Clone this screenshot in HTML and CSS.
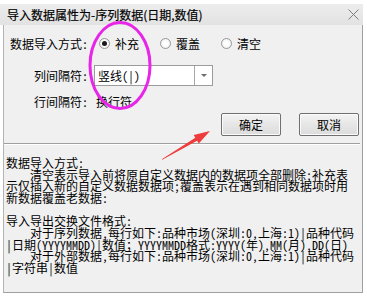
FILE: index.html
```html
<!DOCTYPE html>
<html lang="zh-CN">
<head>
  <meta charset="UTF-8" />
  <title>导入数据属性</title>
  <link rel="stylesheet" href="styles.css">
</head>
<body>
  <div class="window">
    <div class="titlebar">
      <span class="title">导入数据属性为-序列数据(日期,数值)</span>
      <svg class="close" width="11" height="11" viewBox="0 0 11 11">
        <path d="M0.5 0.5L10.5 10.5M10.5 0.5L0.5 10.5" stroke="#7d7d7d" stroke-width="1" />
      </svg>
    </div>
    <div class="panel">
      <div class="form">
        <div class="row row-mode">
          <span class="label">数据导入方式:</span>
          <span class="options">
            <span class="radio checked"><span class="circle"></span>补充</span>
            <span class="radio"><span class="circle"></span>覆盖</span>
            <span class="radio"><span class="circle"></span>清空</span>
          </span>
        </div>
        <div class="row row-combo">
          <span class="label">列间隔符:</span>
          <div class="combo">
            <span class="combo-text">竖线(|)</span>
            <span class="combo-btn"><span class="caret"></span></span>
          </div>
        </div>
        <div class="row row-line">
          <span class="label">行间隔符:</span>
          <span class="value">换行符</span>
        </div>
      </div>
      <div class="actions">
        <button class="btn btn-default">确定</button>
        <button class="btn">取消</button>
      </div>
      <div class="sep"></div>
      <div class="help">数据导入方式:
    清空表示导入前将原自定义数据内的数据项全部删除;补充表
示仅插入新的自定义数据数据项;覆盖表示在遇到相同数据项时用
新数据覆盖老数据:

导入导出交换文件格式:
    对于序列数据,每行如下:品种市场(深圳:0,上海:1)|品种代码
|日期(YYYYMMDD)|数值；YYYYMMDD格式:YYYY(年),MM(月),DD(日)
    对于外部数据,每行如下:品种市场(深圳:0,上海:1)|品种代码
|字符串|数值</div>
    </div>
  </div>

  <svg class="marks" width="367" height="297" viewBox="0 0 367 297">
    <ellipse cx="120" cy="69.5" rx="30" ry="43" fill="none" stroke="#e726e7" stroke-width="3" />
    <polygon points="162.2,163.8 197.1,144.7 198.8,147.5 210,135 193.7,138.9 195.3,141.7 161.8,163.2" fill="#ee3b3b" />
  </svg>
</body>
</html>
```

FILE: styles.css
```css
body {
  margin: 0;
  position: relative;
  background: #fff;
  font-family: "Noto Sans Mono CJK SC", "Noto Sans CJK SC", sans-serif;
  font-size: 12px;
  color: #000;
}
.window {
  width: 363px;
  margin-top: 4px;
}
.titlebar {
  height: 21px;
  display: flex;
  align-items: center;
  justify-content: space-between;
  padding: 0 4px 0 7px;
  background: linear-gradient(#ededed, #e2e2e2);
}
.title {
  font-family: "Noto Sans CJK SC", sans-serif;
  font-size: 12px;
  color: #000;
  -webkit-text-stroke: 0.2px #000;
}
.close {
  display: block;
}
.panel {
  height: 267px;
  margin-left: 3px;
  background: #f0f0f0;
  border-left: 1px solid #b4b4b4;
  border-right: 1px solid #a0a0a0;
  border-bottom: 1px solid #a0a0a0;
}
.form {
  padding: 8px 0 0 6px;
}
.row {
  display: flex;
  align-items: center;
}
.label {
  width: 78px;
  text-align: right;
}
.row-mode {
  height: 20px;
}
.options {
  display: flex;
  margin-left: 11px;
}
.radio {
  display: flex;
  align-items: center;
  margin-right: 21px;
}
.circle {
  width: 11px;
  height: 11px;
  box-sizing: border-box;
  margin-right: 5px;
  border: 1px solid #979797;
  border-radius: 50%;
  background: radial-gradient(#ffffff 30%, #e8e8e8);
  display: flex;
  align-items: center;
  justify-content: center;
}
.radio.checked .circle::after {
  content: "";
  width: 5px;
  height: 5px;
  border-radius: 50%;
  background: #1a1a1a;
}
.row-combo {
  height: 21px;
  margin-top: 12px;
}
.combo {
  display: flex;
  width: 119px;
  height: 21px;
  box-sizing: border-box;
  margin-left: 6px;
  border: 1px solid #9c9c9c;
  background: #fff;
}
.combo-text {
  flex: 1;
  padding-left: 3px;
  line-height: 19px;
}
.combo-btn {
  width: 17px;
  border-left: 1px solid #a8a8a8;
  display: flex;
  align-items: center;
  justify-content: center;
}
.caret {
  width: 0;
  height: 0;
  border-left: 3px solid transparent;
  border-right: 3px solid transparent;
  border-top: 3px solid #6d6d6d;
  margin-top: -1px;
}
.row-line {
  height: 20px;
  margin-top: 5px;
}
.value {
  margin-left: 8px;
}
.actions {
  display: flex;
  justify-content: flex-end;
  gap: 18px;
  margin-top: 2px;
  padding-right: 3px;
}
.btn {
  width: 60px;
  height: 23px;
  padding: 0;
  font-family: inherit;
  font-size: 12px;
  color: #000;
  border: 1px solid #707070;
  border-radius: 2px;
  background: linear-gradient(#f4f4f4, #e6e6e6 50%, #dcdcdc);
  box-shadow: inset 0 0 0 1px #fbfbfb;
}
.sep {
  margin: 7px 2px 0 0;
  border-top: 1px solid #a0a0a0;
  border-bottom: 1px solid #fff;
}
.help {
  padding: 12px 0 0 2px;
  line-height: 11.67px;
  white-space: pre;
}
.marks {
  position: absolute;
  top: -4px;
  left: 0;
  pointer-events: none;
}
```
